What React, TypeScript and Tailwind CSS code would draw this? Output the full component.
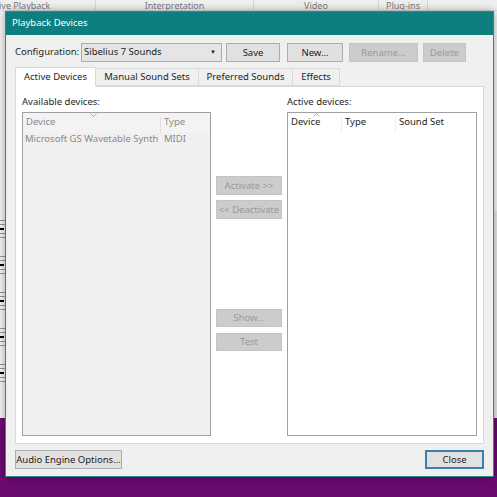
import React from "react";

const font = "font-['Segoe_UI','Noto_Sans',sans-serif]";

function Btn({
  label,
  w,
  h = "h-[19px]",
  disabled = false,
  primary = false,
}: {
  label: string;
  w: string;
  h?: string;
  disabled?: boolean;
  primary?: boolean;
}) {
  const look = disabled
    ? "bg-[#cccccc] border-[#c4c4c4] text-[#9a9a9a]"
    : primary
      ? "bg-[#e1e1e1] border-[#3c7fb1] border-2 text-[#222]"
      : "bg-[#e1e1e1] border-[#adadad] text-[#222]";
  return (
    <div className={`${w} ${h} border ${look} flex items-center justify-center text-[9.5px] leading-none whitespace-nowrap shrink-0`}>
      {label}
    </div>
  );
}

function StaffStrip() {
  // a slice of the score that peeks out behind the dialog
  const staves = [0, 1, 2, 3, 4];
  return (
    <div className="w-[5px] h-full bg-[#f4f4f4] flex flex-col">
      {staves.map((i) => (
        <div key={i} className="h-[36px] flex flex-col justify-center gap-[3px]">
          <div className="h-px bg-[#999]" />
          <div className="h-px bg-[#999]" />
          <div className="h-[2px] w-[4px] bg-black" />
          <div className="h-px bg-[#999]" />
          <div className="h-px bg-[#999]" />
        </div>
      ))}
    </div>
  );
}

export default function App() {
  return (
    <div className={`relative w-[497px] h-[497px] overflow-hidden bg-[#f4f4f4] whitespace-nowrap ${font}`}>
      {/* App behind dialog */}
      <div className="flex flex-col h-full">
        <div className="h-[11px] bg-[#efefef] border-b border-[#dcdcdc] flex text-[9px] leading-[11px] text-[#7a7a7a] shrink-0 overflow-hidden">
          <div className="w-[97px] border-r border-[#d6d6d6] -ml-[1px]">ive Playback</div>
          <div className="w-[158px] border-r border-[#d6d6d6] text-center">Interpretation</div>
          <div className="w-[125px] border-r border-[#d6d6d6] text-center">Video</div>
          <div className="w-[49px] border-r border-[#d6d6d6] text-center">Plug-ins</div>
        </div>
        <div className="flex-1 flex justify-between pt-[200px]">
          <StaffStrip />
          <div className="w-[4px] bg-[#e6e6e6]" />
        </div>
        <div className="h-[79px] bg-[#6a0a70] shrink-0" />
      </div>

      {/* Dialog window */}
      <div className="absolute left-[5px] top-[11px] w-[489px] h-[466px] bg-[#f0f0f0] border border-[#2a8a8c] shadow-[0_0_8px_rgba(0,0,0,0.35)] flex flex-col text-[#1e1e1e]">
        <div className="h-[23px] bg-[#0e7f80] text-white text-[9.5px] flex items-center pl-[6px] shrink-0">
          Playback Devices
        </div>

        <div className="flex-1 flex flex-col px-[9px] pt-[8px] pb-[9px]">
          {/* configuration row */}
          <div className="flex items-center h-[19px] text-[9.5px]">
            <span className="w-[66px]">Configuration:</span>
            <div className="w-[141px] h-[19px] bg-[#e5e5e5] border border-[#acacac] flex items-center pl-[2px] pr-[5px] justify-between">
              <span>Sibelius 7 Sounds</span>
              <span className="text-[6px]">▼</span>
            </div>
            <div className="ml-[4px]">
              <Btn label="Save" w="w-[54px]" />
            </div>
            <div className="ml-[7px]">
              <Btn label="New..." w="w-[56px]" />
            </div>
            <div className="ml-[6px]">
              <Btn label="Rename..." w="w-[69px]" disabled />
            </div>
            <div className="ml-[5px]">
              <Btn label="Delete" w="w-[43px]" disabled />
            </div>
          </div>

          {/* tabs */}
          <div className="flex items-end h-[24px] text-[9.5px] relative z-10">
            <div className="w-[81px] h-[20px] bg-white border border-[#d9d9d9] border-b-white flex items-center justify-center -mb-px">
              Active Devices
            </div>
            <div className="w-[103px] h-[18px] bg-[#f0f0f0] border border-[#d9d9d9] border-l-0 flex items-center justify-center">
              Manual Sound Sets
            </div>
            <div className="w-[94px] h-[18px] bg-[#f0f0f0] border border-[#d9d9d9] border-l-0 flex items-center justify-center">
              Preferred Sounds
            </div>
            <div className="w-[47px] h-[18px] bg-[#f0f0f0] border border-[#d9d9d9] border-l-0 flex items-center justify-center">
              Effects
            </div>
          </div>

          {/* tab panel */}
          <div className="h-[358px] bg-white border border-[#d9d9d9] flex px-[6px] pt-[8px] pb-[7px] gap-[5px] text-[9.5px]">
            {/* available */}
            <div className="flex flex-col w-[189px]">
              <div className="h-[17px]">Available devices:</div>
              <div className="flex-1 bg-[#f0f0f0] border border-[#a0a0a0] flex flex-col text-[#8a8a8a]">
                <div className="h-[20px] flex items-end pb-[4px] relative bg-[#f3f3f3]">
                  <svg className="absolute left-[67px] top-[0px]" width="7" height="4" viewBox="0 0 7 4">
                    <path d="M0.5 0.5 L3.5 3.5 L6.5 0.5" fill="none" stroke="#999" strokeWidth="0.8" />
                  </svg>
                  <div className="w-[138px] pl-[3px] border-r border-[#e0e0e0] h-full flex items-end -mb-[4px] pb-[4px]">Device</div>
                  <div className="pl-[3px]">Type</div>
                </div>
                <div className="flex h-[13px] items-center">
                  <div className="w-[139px] pl-[2px]">Microsoft GS Wavetable Synth</div>
                  <div className="pl-[2px]">MIDI</div>
                </div>
              </div>
            </div>

            {/* middle buttons */}
            <div className="flex flex-col w-[66px] pt-[81px]">
              <Btn label="Activate >>" w="w-[66px]" disabled />
              <div className="h-[5px]" />
              <Btn label="<< Deactivate" w="w-[66px]" disabled />
              <div className="h-[90px]" />
              <Btn label="Show..." w="w-[66px]" h="h-[18px]" disabled />
              <div className="h-[6px]" />
              <Btn label="Test" w="w-[66px]" h="h-[18px]" disabled />
            </div>

            {/* active */}
            <div className="flex flex-col w-[190px]">
              <div className="h-[17px]">Active devices:</div>
              <div className="flex-1 bg-white border border-[#a0a0a0] flex flex-col">
                <div className="h-[20px] flex items-end pb-[4px] relative">
                  <svg className="absolute left-[25px] top-[0px]" width="7" height="4" viewBox="0 0 7 4">
                    <path d="M0.5 3.5 L3.5 0.5 L6.5 3.5" fill="none" stroke="#999" strokeWidth="0.8" />
                  </svg>
                  <div className="w-[54px] pl-[3px] border-r border-[#eeeeee] h-full flex items-end -mb-[4px] pb-[4px]">Device</div>
                  <div className="w-[54px] pl-[3px] border-r border-[#eeeeee] h-full flex items-end -mb-[4px] pb-[4px]">Type</div>
                  <div className="pl-[3px]">Sound Set</div>
                </div>
              </div>
            </div>
          </div>

          {/* bottom buttons */}
          <div className="flex justify-between mt-[6px]">
            <Btn label="Audio Engine Options..." w="w-[107px]" />
            <Btn label="Close" w="w-[59px]" primary />
          </div>
        </div>
      </div>
    </div>
  );
}
